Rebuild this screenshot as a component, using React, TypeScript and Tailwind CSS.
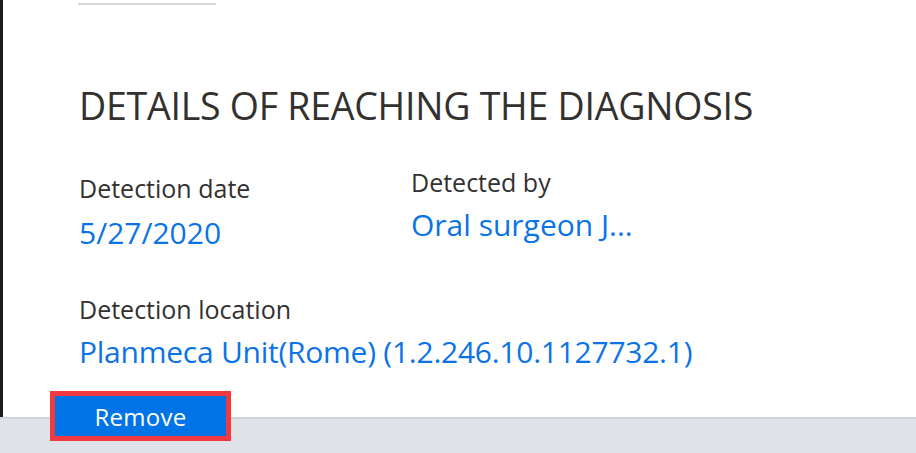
import React from "react";

export default function App() {
  return (
    <div
      className="relative w-[916px] h-[453px] bg-white flex flex-col overflow-hidden"
      style={{ fontFamily: '"Open Sans", "Noto Sans", sans-serif' }}
    >
      <div className="flex-1 border-l-[3px] border-[#1b1b1b] pl-[76px] flex flex-col">
        <div className="-ml-px mt-[3px] w-[138px] h-[2px] bg-[#d3d8dd]" />
        <h1 className="mt-[79px] text-[37.5px] leading-[44px] text-[#323130] tracking-[-0.25px]">
          DETAILS OF REACHING THE DIAGNOSIS
        </h1>
        <div className="mt-[45px] flex items-start">
          <div className="w-[332px]">
            <div className="text-[25px] leading-[30px] text-[#323130]">Detection date</div>
            <div className="mt-[12px] text-[30px] leading-[36px] text-[#0b73e6]">5/27/2020</div>
          </div>
          <div className="-mt-[6px]">
            <div className="text-[25px] leading-[30px] text-[#323130]">Detected by</div>
            <div className="mt-[10px] text-[30px] leading-[36px] text-[#0b73e6]">Oral surgeon J...</div>
          </div>
        </div>
        <div className="mt-[43px]">
          <div className="text-[25px] leading-[30px] text-[#323130]">Detection location</div>
          <div className="mt-[10px] text-[30px] leading-[36px] text-[#0b73e6] tracking-[-0.25px]">
            Planmeca Unit(Rome) (1.2.246.10.1127732.1)
          </div>
        </div>
      </div>
      <div className="h-[36px] bg-[#dfe3e8] border-t-2 border-[#cfd5db]" />
      <div className="absolute left-[50px] top-[391px] w-[181px] h-[50px] border-[5px] border-[#f2393f] bg-[#0073e6] flex items-center justify-center">
        <span className="text-white text-[24px] leading-none mt-[2px] tracking-[0.3px]">Remove</span>
      </div>
    </div>
  );
}
